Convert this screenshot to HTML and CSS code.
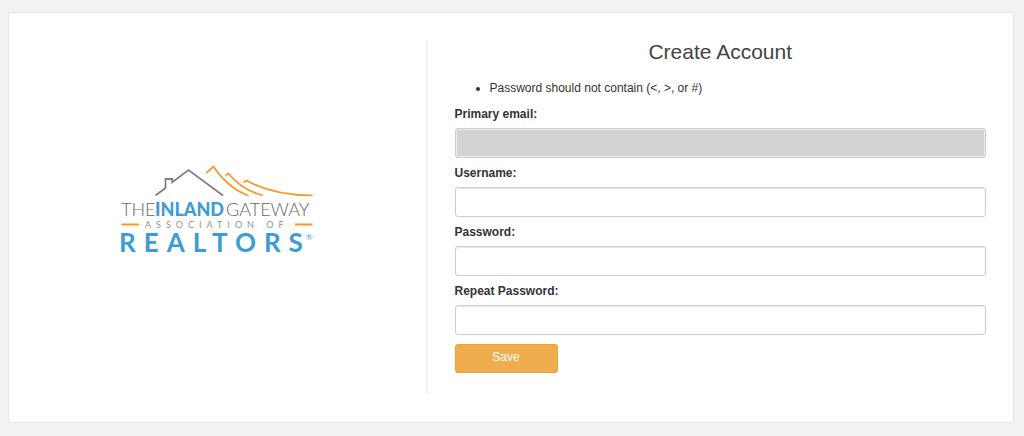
FILE: index.html
```html
<!DOCTYPE html>
<html lang="en">
<head>
<meta charset="utf-8">
<meta name="viewport" content="width=device-width, initial-scale=1">
<title>Create Account</title>
<link rel="stylesheet" href="styles.css">
</head>
<body>
<main class="card">
  <div class="brand">
    <svg class="logo" width="200" height="102" viewBox="116 158 200 102" role="img" aria-label="The Inland Gateway Association of Realtors">
      <g fill="none" stroke-width="1.8" stroke-linejoin="miter">
        <path stroke="#808184" d="M155.500 195.500L165.500 188V179H172.300V182.300L188.500 170L223 195.500"/>
        <path stroke="#f7982f" d="M206 173.200L213.500 166.500C222 179 232 190 248.500 195.500"/>
        <path stroke="#f7982f" d="M225.500 175.500L228.500 173.500C236 183 246 191 263 195.500"/>
        <path stroke="#f7982f" d="M243.500 182.500L246.500 180.500C262 189 283 195.500 312.500 195.300"/>
        <path stroke="#f7982f" d="M121.500 224.500H139M295 224.500H312.500"/>
      </g>
      <text class="logo-thin" x="121" y="216">THE</text>
      <text class="logo-heavy" x="155" y="216">INLAND</text>
      <text class="logo-thin" x="226" y="216">GATEWAY</text>
      <text class="logo-small" x="145" y="228">ASSOCIATION OF</text>
      <text class="logo-main" x="119" y="252">REALTORS</text>
      <text class="logo-mark" x="306" y="240">®</text>
    </svg>
  </div>
  <form class="account">
    <h1 class="title">Create Account</h1>
    <ul class="rules"><li>Password should not contain (&lt;, &gt;, or #)</li></ul>
    <div class="field"><label for="email">Primary email:</label><input id="email" type="email" disabled></div>
    <div class="field"><label for="username">Username:</label><input id="username" type="text"></div>
    <div class="field"><label for="password">Password:</label><input id="password" type="password"></div>
    <div class="field"><label for="repeat">Repeat Password:</label><input id="repeat" type="password"></div>
    <button class="save" type="submit">Save</button>
  </form>
</main>
</body>
</html>
```
FILE: styles.css
```css
* { box-sizing: border-box; }

body {
  margin: 0;
  padding: 12px 10px 12px 8px;
  background: #f2f2f2;
  color: #333;
  font: 12px/20px "Liberation Sans", Arial, sans-serif;
}

.card {
  display: grid;
  grid-template-columns: 41fr 59fr;
  padding: 27px 27px 28px;
  border: 1px solid #e7e7e7;
  background: #fff;
}

.brand {
  display: flex;
  align-items: center;
  justify-content: center;
  padding: 0 30px 16px 0;
}

.logo { display: block; }

.logo-thin { font: 300 18px Lato, sans-serif; fill: #66676a; }
.logo-small { font: 400 9px Lato, sans-serif; letter-spacing: 5px; fill: #929396; }
.logo-heavy { font: 900 18px Lato, sans-serif; fill: #3d9bd6; }
.logo-main { font: 700 26px Lato, sans-serif; letter-spacing: 8px; fill: #3d9bd6; }
.logo-mark { font: 8px Lato, sans-serif; fill: #3d9bd6; }

.account {
  padding: 0 0 21px 27px;
  border-left: 2px solid #efefef;
}

.title {
  margin: 0 0 14px;
  font-size: 21px;
  font-weight: 400;
  line-height: 24px;
  text-align: center;
  color: #444;
}

.rules {
  margin: 0 0 6px;
  padding-left: 35px;
}

.field {
  display: flex;
  flex-direction: column;
  gap: 4px;
  margin-bottom: 5px;
}

.field label { font-weight: 700; }

.field input {
  width: 100%;
  height: 30px;
  padding: 4px 8px;
  border: 1px solid #ccc;
  border-radius: 3px;
  background: #fff;
  box-shadow: inset 0 1px 1px #e8e8e8;
  font: inherit;
}

.field input:disabled {
  background: #d1d3d4;
  box-shadow: inset 0 0 0 1px #eee;
}

.save {
  display: block;
  width: 103px;
  height: 29px;
  margin-top: 9px;
  padding: 0 0 3px;
  border: 1px solid #eea236;
  border-radius: 3px;
  background: #f0ad4e;
  color: #fff;
  font: inherit;
}
```
